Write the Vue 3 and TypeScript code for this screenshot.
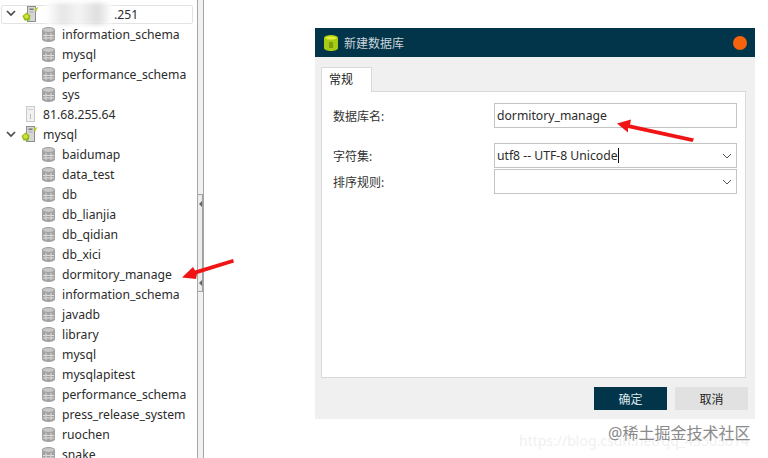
<script setup lang="ts">
type Row = { label: string; kind: 'server' | 'off' | 'db'; open?: boolean; first?: boolean }
const names1 = ['information_schema', 'mysql', 'performance_schema', 'sys']
const names2 = ['baidumap', 'data_test', 'db', 'db_lianjia', 'db_qidian', 'db_xici', 'dormitory_manage', 'information_schema', 'javadb', 'library', 'mysql', 'mysqlapitest', 'performance_schema', 'press_release_system', 'ruochen', 'snake']
const rows: Row[] = [
  { label: '.251', kind: 'server', open: true, first: true },
  ...names1.map((label): Row => ({ label, kind: 'db' })),
  { label: '81.68.255.64', kind: 'off' },
  { label: 'mysql', kind: 'server', open: true },
  ...names2.map((label): Row => ({ label, kind: 'db' })),
]
</script>

<template>
  <div class="page">
    <aside class="tree">
      <div v-for="(r, i) in rows" :key="i" class="row" :class="[r.kind, { first: r.first }]">
        <svg v-if="r.open" class="caret" width="10" height="7" viewBox="0 0 10 7"><path d="M1 1l4 4 4-4" fill="none" stroke="#4a4a4a" stroke-width="1.7" /></svg>
        <svg v-if="r.kind === 'server'" class="ico-server" width="17" height="18" viewBox="0 0 17 18">
          <rect x="5.500" y="1.500" width="8" height="15" fill="#d6d6d6" stroke="#8d8d8d" />
          <rect x="7.500" y="3.500" width="4" height="1.500" fill="#777" />
          <rect x="7.500" y="6.500" width="4" height="1" fill="#a5a5a5" />
          <path d="M0.500 11l4-3.500 4 3-1 5h-5z" fill="#8dbb16" />
          <path d="M12.500 3.500l4-1.500-2.500 5z" fill="#b7d12c" />
          <circle cx="4.500" cy="11.500" r="2.200" fill="#d3e23a" />
        </svg>
        <svg v-else-if="r.kind === 'off'" class="ico-off" width="9" height="16" viewBox="0 0 9 16">
          <rect x="0.500" y="0.500" width="8" height="15" fill="#f1f1f1" stroke="#c9c9c9" />
          <rect x="2" y="3" width="5" height="1" fill="#cfcfcf" />
          <rect x="4" y="8" width="1" height="5" fill="#bdbdbd" />
        </svg>
        <svg v-else class="ico-db" width="13" height="15" viewBox="0 0 13 15">
          <path d="M0 3c0-4 13-4 13 0v9c0 4-13 4-13 0z" fill="#a3a3a3" />
          <path d="M1 3c0-2.500 11-2.500 11 0s-11 2.500-11 0z" fill="#c9c9c9" />
          <path d="M4 6v7M9 6v7M1 8.500h11M1 11h11" stroke="#dcdcdc" stroke-width="1" />
        </svg>
        <span class="label">{{ r.label }}</span>
        <i v-if="r.first" class="blur"></i>
      </div>
    </aside>

    <div class="gutter">
      <div class="grip">
        <span class="tri"></span>
        <span class="tri"></span>
      </div>
    </div>

    <main class="main">
      <section class="dialog">
        <header class="titlebar">
          <div class="title">
            <svg width="14" height="16" viewBox="0 0 14 16">
              <path d="M0 3c0-4 14-4 14 0v10c0 4-14 4-14 0z" fill="#a8cc12" />
              <path d="M1.500 3c0-2 11-2 11 0s-11 2-11 0z" fill="#e3ef3c" />
              <path d="M5 7h4v6H5z" fill="#7f9d10" />
            </svg>
            <span>新建数据库</span>
          </div>
          <span class="close"></span>
        </header>
        <div class="content">
          <div class="tabs"><div class="tab">常规</div></div>
          <div class="panel">
            <div class="field name">
              <label>数据库名:</label>
              <div class="box">dormitory_manage</div>
            </div>
            <div class="field charset">
              <label>字符集:</label>
              <div class="box select">
                <span>utf8 -- UTF-8 Unicode<i class="cursor"></i></span>
                <svg width="10" height="6" viewBox="0 0 10 6"><path d="M1 1l4 4 4-4" fill="none" stroke="#555" /></svg>
              </div>
            </div>
            <div class="field collate">
              <label>排序规则:</label>
              <div class="box select">
                <span></span>
                <svg width="10" height="6" viewBox="0 0 10 6"><path d="M1 1l4 4 4-4" fill="none" stroke="#555" /></svg>
              </div>
            </div>
          </div>
          <div class="actions">
            <button class="btn primary">确定</button>
            <button class="btn">取消</button>
          </div>
        </div>
      </section>
    </main>

    <svg class="arrows" width="768" height="458" viewBox="0 0 768 458">
      <g fill="#f01414">
        <path d="M694 138.500 L692.500 142 L628 128 L628 132.500 L617 123.500 L631 119.500 L630 124.500z" />
        <path d="M233 259 L234 262.500 L197 274 L196 279 L182 277.500 L193 267 L195 270.500z" />
      </g>
    </svg>
    <div class="mark-back">https://blog.csdn.net/qq_43503014</div>
    <div class="mark">@稀土掘金技术社区</div>
  </div>
</template>

<style>
html, body { margin: 0; background: #fff; }
</style>

<style scoped>
.page {
  position: relative;
  display: flex;
  width: 768px;
  height: 458px;
  overflow: hidden;
  background: #fff;
  font-family: "Noto Sans", "Noto Sans CJK SC", sans-serif;
  font-size: 12.2px;
  color: #2b2b2b;
}
.tree {
  width: 198px;
  flex: none;
  box-sizing: border-box;
  padding-top: 4px;
  border-right: 1px solid #a6a6a6;
  overflow: hidden;
}
.row {
  position: relative;
  height: 20px;
  display: flex;
  align-items: center;
  white-space: nowrap;
  box-sizing: border-box;
}
.row.first {
  margin-left: 1px;
  margin-right: 4px;
  margin-top: 1px;
  height: 19px;
  border: 1px solid #e3e3e3;
  border-radius: 2px;
}
.caret { position: absolute; left: 6px; top: 7px; }
.first .caret { left: 4px; top: 4px; }
.ico-server { position: absolute; left: 21px; top: 1px; }
.first .ico-server { left: 20px; top: -1px; }
.ico-off { position: absolute; left: 26px; top: 2px; }
.ico-db { position: absolute; left: 42px; top: 3px; }
.row .label { padding-left: 43px; }
.row.db .label { padding-left: 62px; }
.row.first .label { padding-left: 112px; }
.blur {
  position: absolute;
  left: 44px;
  top: -3px;
  width: 66px;
  height: 22px;
  background: linear-gradient(90deg, #fff 0, #e6e6e6 25%, #f4f4f4 50%, #dedede 78%, #fff 100%);
  filter: blur(2px);
}
.gutter {
  width: 6px;
  flex: none;
  box-sizing: border-box;
  background: #f1f1f1;
  border-right: 1px solid #a6a6a6;
  padding-top: 194px;
}
.grip {
  height: 98px;
  box-sizing: border-box;
  border: 1px solid #a0a0a0;
  border-left: 0;
  background: #ececec;
  display: flex;
  flex-direction: column;
  justify-content: space-between;
  padding: 6px 0 5px;
}
.tri {
  width: 0;
  height: 0;
  border: 3px solid transparent;
  border-left-width: 0;
  border-right: 3px solid #666;
  margin-left: 1px;
}
.main {
  flex: 1;
  min-width: 0;
  padding: 28px 13px 0 111px;
}
.dialog {
  width: 440px;
  height: 391px;
  background: #f0f0f0;
  display: flex;
  flex-direction: column;
}
.titlebar {
  height: 29px;
  flex: none;
  background: #03354a;
  display: flex;
  align-items: center;
  justify-content: space-between;
  padding: 0 8px 0 9px;
  color: #c9d4d9;
}
.title { display: flex; align-items: center; gap: 6px; }
.title span { font-size: 12px; }
.close { width: 14px; height: 14px; border-radius: 50%; background: #f5640c; }
.content {
  flex: 1;
  display: flex;
  flex-direction: column;
  padding: 10px 9px 9px 6px;
}
.tabs { display: flex; position: relative; z-index: 1; }
.tab {
  width: 51px;
  height: 25px;
  box-sizing: border-box;
  background: #fff;
  border: 1px solid #d9d9d9;
  border-bottom: 0;
  padding-left: 7px;
  line-height: 23px;
  font-size: 12px;
  color: #222;
}
.panel {
  height: 287px;
  margin-top: -1px;
  box-sizing: border-box;
  background: #fff;
  border: 1px solid #d9d9d9;
  padding: 11px 8px 0 11px;
}
.field { display: flex; align-items: center; }
.field label { width: 161px; flex: none; font-size: 12px; color: #333; }
.charset { margin-top: 15px; }
.collate { margin-top: 1px; }
.box {
  flex: 1;
  height: 25px;
  box-sizing: border-box;
  border: 1px solid #c4c4c4;
  padding: 0 4px 0 2px;
  display: flex;
  align-items: center;
  justify-content: space-between;
  color: #2b2b2b;
}
.select { padding-right: 4px; }
.cursor {
  display: inline-block;
  width: 1px;
  height: 15px;
  background: #111;
  vertical-align: -3px;
}
.actions {
  display: flex;
  justify-content: flex-end;
  gap: 8px;
  margin-top: 9px;
  margin-right: -2px;
}
.btn {
  width: 73px;
  height: 23px;
  padding: 0;
  border: 0;
  background: #e1e1e1;
  color: #222;
  font: 12px "Noto Sans CJK SC", sans-serif;
}
.primary { background: #03354a; color: #dbe6ea; }
.arrows { position: absolute; left: 0; top: 0; pointer-events: none; }
.mark-back {
  position: absolute;
  left: 519px;
  top: 431px;
  font-size: 14px;
  color: #f0f0f0;
  white-space: nowrap;
}
.mark {
  position: absolute;
  left: 608px;
  top: 422px;
  font-size: 16px;
  line-height: 22px;
  color: #8a8a8a;
  white-space: nowrap;
}
</style>
